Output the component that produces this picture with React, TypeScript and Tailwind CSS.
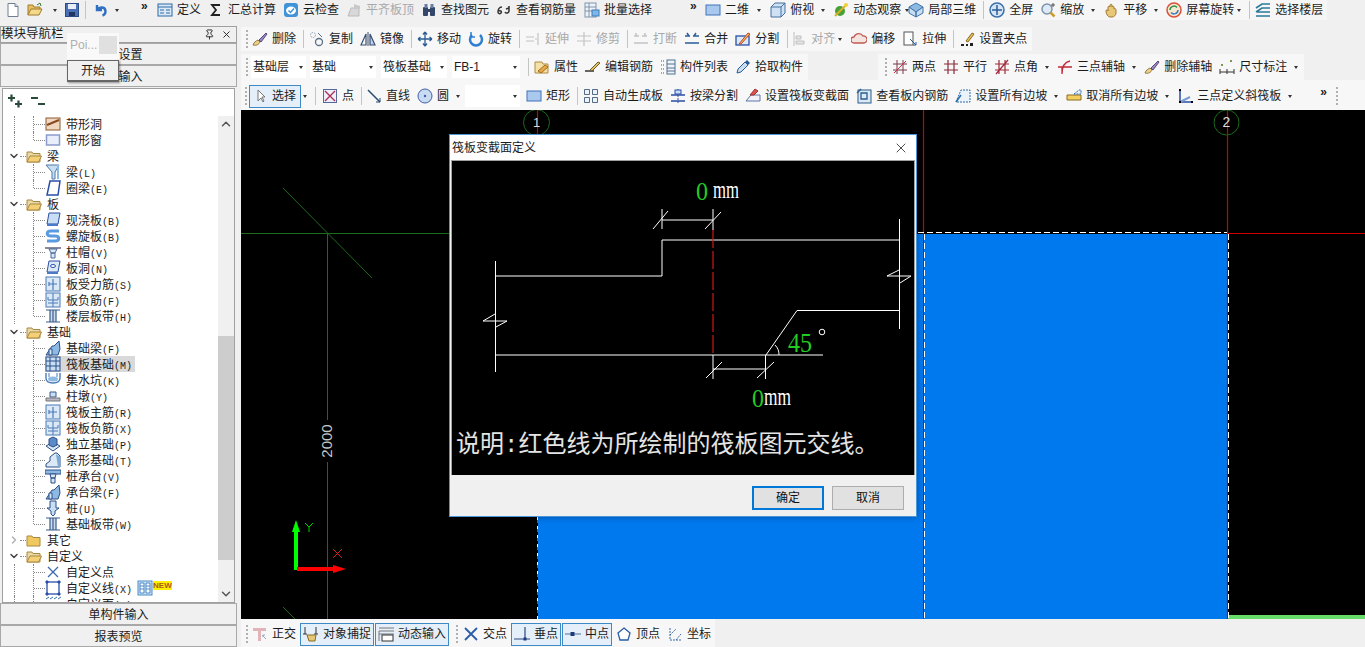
import type { ReactNode } from "react";
import clsx from "clsx";
import { ChevronDown, ChevronRight, ChevronUp, Pin, X } from "lucide-react";

const CJK = "[font-family:'Liberation_Sans','Noto_Sans_CJK_SC',sans-serif]";

const icons: Record<string, ReactNode> = {
	new: <><path d="M3 1.5h7l3 3v10H3z" fill="#fff" stroke="#6f7f94" /><path d="M10 1.5v3h3" fill="#dde3ee" stroke="#6f7f94" /></>,
	open: <><path d="M1 13V3h5l1 2h6v2" fill="#e8c060" stroke="#a07a30" /><path d="M1 13l3-6h11l-3 6z" fill="#f4d98a" stroke="#a07a30" /><path d="M10 3l3-2 1 3" fill="none" stroke="#3a7a3a" /></>,
	save: <><rect x="1.5" y="1.5" width="13" height="13" fill="#4a6fb5" stroke="#2c4a86" /><rect x="4" y="2" width="8" height="5" fill="#e8eef8" /><rect x="5" y="10" width="6" height="4" fill="#22355e" /></>,
	undo: <path d="M4 3v5h5M4.500 7.500c2-3 8-3 8 2 0 2-1.500 3.500-3 4" fill="none" stroke="#2f6fc4" strokeWidth="2.400" />,
	define: <><rect x="1" y="2" width="14" height="12" fill="#dbe8f6" stroke="#2c6aa8" /><path d="M1 5h14M3 8h4M3 11h4M9 8h4M9 11h4" stroke="#2c6aa8" /></>,
	sigma: <path d="M12 3H4l4 5-4 5h8" fill="none" stroke="#222" strokeWidth="1.800" />,
	cloud: <><rect x="1" y="1" width="14" height="14" rx="3" fill="#3f93d6" /><ellipse cx="8" cy="8.500" rx="5" ry="4" fill="#fff" /><path d="M5.500 8.500l2 2 3.500-4" fill="none" stroke="#3f93d6" strokeWidth="1.500" /></>,
	alignTop: <><path d="M2 14l3-8h8v8z" fill="#d8d8d8" stroke="#bbb" /><path d="M8 2l6 2v3H8z" fill="#c8c8c8" /></>,
	binoc: <><rect x="2" y="5" width="5" height="9" rx="1" fill="#34476b" /><rect x="9" y="5" width="5" height="9" rx="1" fill="#34476b" /><rect x="3.500" y="2" width="3" height="4" fill="#6a7da0" /><rect x="9.500" y="2" width="3" height="4" fill="#6a7da0" /><rect x="7" y="7" width="2" height="3" fill="#34476b" /></>,
	rebarQty: <path d="M6 5C3 5 2 8 2 10s2 2 3 1 0-3-2-2M9 10c1 2 4 1 4-1 0-2 0-4 0-5M10 7l3-1" fill="none" stroke="#333" strokeWidth="1.500" />,
	batch: <><rect x="1" y="1" width="11" height="14" fill="#eef3f9" stroke="#7f93ad" /><path d="M1 5h11M1 9h11M5 1v14" stroke="#7f93ad" /><rect x="8" y="8" width="7" height="6" fill="#7db6e8" stroke="#3d79b6" /></>,
	twoD: <rect x="1" y="3" width="14" height="10" fill="#a9c8ee" stroke="#3f73b8" />,
	cube: <><path d="M1 5l4-4h10v10l-4 4H1z" fill="#cfe2f5" stroke="#46709c" /><path d="M1 5h10v10M11 5l4-4" fill="none" stroke="#46709c" /></>,
	orbit: <><circle cx="7" cy="9" r="5" fill="#4aa03a" /><path d="M2 14L14 2" stroke="#d8b020" strokeWidth="2" /><circle cx="13" cy="3" r="2" fill="#f0d040" /></>,
	cube3: <><path d="M8 1l7 4-7 5-7-5z" fill="#8db9e3" stroke="#3f73a8" /><path d="M1 5v6l7 4v-5zM15 5v6l-7 4v-5z" fill="#c9def3" stroke="#3f73a8" /></>,
	full: <><circle cx="8" cy="8" r="7" fill="#d5e5f6" stroke="#3b6fa8" strokeWidth="1.500" /><path d="M8 3v10M3 8h10" stroke="#2c5c96" strokeWidth="1.500" /></>,
	zoom: <><circle cx="7" cy="7" r="5" fill="#dce9f6" stroke="#7f93ad" strokeWidth="1.500" /><path d="M10.500 10.500l4 4" stroke="#c9a030" strokeWidth="2.500" /><path d="M13 1v4M11 3h4" stroke="#555" /></>,
	pan: <><path d="M3 9c0-2 2-1 2 0V5c0-1 2-1 2 0V3c0-1 2-1 2 0v2c0-1 2-1 2 0v2c1-1 2 0 2 1v3c0 2-2 4-4 4H7c-2 0-4-3-4-6z" fill="#e8c878" stroke="#a07a30" /></>,
	spin: <><circle cx="8" cy="8" r="7" fill="#f4ead0" stroke="#d9503a" strokeWidth="1.500" /><path d="M4 8a4 4 0 0 1 7-2.500" fill="none" stroke="#2f8f4a" strokeWidth="1.500" /><path d="M12 8a4 4 0 0 1-7 2.500" fill="none" stroke="#3a7bc8" strokeWidth="1.500" /></>,
	floors: <path d="M1 6l6-4h8M1 10l6-4h8M1 14h14M2 10h13" fill="none" stroke="#2a7a9a" strokeWidth="1.600" />,
	brush: <><path d="M1 14c4 1 6-1 7-3l-2-2c-2 1-4 2-5 5z" fill="#f0d080" stroke="#8a7a50" /><path d="M7 9l7-7 1 1-6 8z" fill="#9a86c0" stroke="#5a4a80" /></>,
	copy: <><circle cx="4" cy="4" r="2.500" fill="none" stroke="#8a99aa" strokeDasharray="1.500 1" /><circle cx="10" cy="11" r="3.500" fill="none" stroke="#5a6f88" strokeWidth="1.300" /><path d="M9 2l4 4" stroke="#5a6f88" /></>,
	mirror: <><path d="M1 14L6 3v11z" fill="none" stroke="#3a4f70" strokeWidth="1.200" /><path d="M15 14L10 3v11z" fill="#bcd2ea" stroke="#3a4f70" strokeWidth="1.200" /><path d="M8 1v14" stroke="#3a4f70" /></>,
	move: <path d="M8 1v14M1 8h14M8 1L6 3.500M8 1l2 2.500M8 15l-2-2.500M8 15l2-2.500M1 8l2.500-2M1 8l2.500 2M15 8l-2.500-2M15 8l-2.500 2" fill="none" stroke="#2a5c96" strokeWidth="1.300" />,
	rotate: <><path d="M4 4a6 6 0 1 0 8 0" fill="none" stroke="#2f7fd0" strokeWidth="2.500" /><path d="M3 1v5h4" fill="none" stroke="#2f7fd0" strokeWidth="1.500" /></>,
	extend: <path d="M13 2v12M1 6h8M1 10h8M10 8h2" stroke="#c4c4c4" strokeWidth="1.200" />,
	trim: <path d="M8 1v14M1 5h14M1 10h14" stroke="#c4c4c4" strokeWidth="1.200" />,
	breakLine: <path d="M1 5h5M9 5h5M1 12h14M3 2v3M12 2v3" stroke="#c4c4c4" strokeWidth="1.500" />,
	merge: <path d="M1 5h5M9 5h6M1 12h14M3 2l2 3M12 2l-2 3" stroke="#2a5c96" strokeWidth="1.500" fill="none" />,
	split: <><rect x="1" y="5" width="13" height="9" fill="#dbe8f6" stroke="#2a4fa8" strokeWidth="1.300" /><path d="M4 13l9-11 2 1-9 10z" fill="#f0c040" stroke="#c04040" /></>,
	align: <path d="M3 1v14M5 5h5v3H5zM5 10h8v3H5z" fill="#e4e4e4" stroke="#c0c0c0" />,
	offset: <path d="M3 12a3 3 0 0 1 0-6 5 5 0 0 1 9-1 3.500 3.500 0 0 1 1 7z" fill="#f3e4e0" stroke="#c05a50" strokeWidth="1.300" />,
	stretch: <><rect x="2" y="1" width="9" height="13" fill="#fff" stroke="#555" /><path d="M8 8l6 6M11 14h3v-3" fill="none" stroke="#2a5c96" /></>,
	grip: <><path d="M2 14h3M7 14h2" stroke="#222" strokeWidth="2" /><rect x="11" y="12" width="3" height="3" fill="#222" /><path d="M7 10l6-8 2 1-6 8z" fill="#e8c060" stroke="#8a6a20" /></>,
	prop: <><path d="M1 14V3h7l1 2h5v9z" fill="#f4e0a8" stroke="#b08a40" /><path d="M4 12l7-6 3 2-7 6z" fill="#e8a848" stroke="#a07020" /></>,
	editBar: <><path d="M0 12h9" stroke="#333" strokeWidth="1.500" /><path d="M5 11L13 3l2 1-8 8z" fill="#e8c060" stroke="#6a5a30" /></>,
	list: <><path d="M1 2h3M1 6h3M1 10h3M1 14h3" stroke="#7a8ca6" strokeWidth="1.500" strokeDasharray="1 1" /><rect x="7" y="1" width="8" height="14" fill="#eef3f9" stroke="#52708f" /><path d="M7 5h8M7 9h8M7 12h8" stroke="#52708f" /></>,
	pick: <><path d="M2 14l1-4 7-7 3 3-7 7z" fill="#c9def3" stroke="#2a5c96" /><path d="M10 3l2-2 3 3-2 2z" fill="#2a5c96" /></>,
	twoPoint: <><path d="M1 5h14M1 11h14M5 1v14M11 1v14" stroke="#7a3a4a" /><path d="M2 14L14 2" stroke="#d02a40" /></>,
	parallel: <path d="M1 5h14M1 11h14M5 1v14M11 1v14" stroke="#8a2a3a" strokeWidth="1.200" />,
	pointAngle: <path d="M1 5h14M1 11h14M5 1v14M11 1v14M2 15L14 1" stroke="#a02a3a" strokeWidth="1.200" />,
	threeAxis: <path d="M1 8h14M5 15c0-8 3-12 8-13M5 8v7" fill="none" stroke="#c02a3a" strokeWidth="1.300" />,
	dim: <><path d="M1 13h14M1 10v5M8 10v5M15 10v5" stroke="#333" /><rect x="2" y="5" width="2" height="2" fill="#7a9a4a" /><rect x="11" y="1" width="2" height="2" fill="#7a9a4a" /></>,
	cursor: <path d="M6 2v11l3-3 2 4 1-1-2-4h3z" fill="#fff" stroke="#777" />,
	point: <><rect x="1.500" y="1.500" width="13" height="13" fill="#eef" stroke="#556a9a" /><path d="M3 3l10 10M13 3L3 13" stroke="#b03050" strokeWidth="1.400" /></>,
	line: <><path d="M2 2l12 12" stroke="#2a4a70" strokeWidth="1.500" /><path d="M14 14v-4M14 14h-4" stroke="#2a4a70" /></>,
	circle: <><circle cx="8" cy="8" r="7" fill="#c9daf3" stroke="#3f5fa8" /><circle cx="8" cy="8" r="1.200" fill="#3f5fa8" /></>,
	rect: <rect x="1" y="3" width="14" height="10" fill="#a9c8ee" stroke="#3f73b8" />,
	autoGen: <path d="M1.500 1.500h5v5h-5zM9.500 1.500h5v5h-5zM1.500 9.500h5v5h-5zM9.500 9.500h5v5h-5z" fill="#eef3f9" stroke="#506a86" />,
	beamSplit: <><path d="M1 7h14M1 13h14" stroke="#2a4fa8" strokeWidth="1.300" /><path d="M8 1v14" stroke="#2a4fa8" strokeDasharray="2 1" /><rect x="5" y="2" width="6" height="4" fill="#c9def3" stroke="#2a4fa8" /></>,
	varSection: <><path d="M1 13l5-6h9v6z" fill="#f3f0f8" stroke="#5a78a8" /><path d="M5 7l5-6 3 2-4 4z" fill="#e05050" stroke="#a03030" /></>,
	viewRebar: <><rect x="2" y="2" width="13" height="13" fill="#dbe8f6" stroke="#2a5c8a" /><path d="M1 5l4-4M5 5h6v6H5z" fill="none" stroke="#2a5c8a" strokeWidth="1.300" /></>,
	slopeAll: <><path d="M1 14L6 2h9v12z" fill="#eaf2fa" stroke="#2a6ca8" strokeDasharray="2 1" /><path d="M1 14L6 7" stroke="#2a6ca8" strokeWidth="1.500" /></>,
	slopeNone: <><path d="M1 12V7h14v5z" fill="#f4d060" stroke="#8a6a20" /><path d="M8 6l5-4h2v4z" fill="#eaf2fa" stroke="#2a6ca8" strokeDasharray="2 1" /></>,
	threeSlope: <><path d="M3 2v12h12" fill="none" stroke="#2a4fa8" strokeWidth="1.500" /><path d="M3 14l10-5" stroke="#7a9ad0" strokeWidth="2" /><rect x="2" y="1" width="2" height="2" /><rect x="14" y="13" width="2" height="2" /><rect x="2" y="13" width="2" height="2" /></>,
	ortho: <><path d="M1 2h13v3H9v10H6V5H1z" fill="#e0b4b8" /><path d="M10 9l4 4M12 8v2h-2" stroke="#9ab" fill="none" /></>,
	snap: <><path d="M2 1v7M13 1v7M0 8h4M11 8h4" stroke="#333" /><path d="M4 9h9l-1 6H6z" fill="#e4c878" stroke="#8a6a20" /></>,
	dynInput: <><path d="M1 2h15M1 5h15M1 5v10M1 8h15" stroke="#777" /><rect x="4" y="9" width="11" height="6" fill="#fff" stroke="#333" /></>,
	cross: <path d="M2 2l12 12M14 2L2 14" stroke="#2a5ca8" strokeWidth="1.800" />,
	perp: <><path d="M0 13h16M11 1v12" stroke="#2a4a80" strokeWidth="1.200" /><rect x="9.500" y="11.500" width="3" height="3" fill="#1a3a7a" /></>,
	mid: <><path d="M0 8h16" stroke="#7a90b0" strokeWidth="1.400" /><rect x="5.500" y="6" width="4" height="4" fill="#1a3a7a" /></>,
	vertex: <path d="M8 2l6 5-2 7H4L2 7z" fill="#fff" stroke="#2a5ca8" strokeWidth="1.300" />,
	coord: <path d="M3 2v12M3 14h11M3 9l6-6M9 14l5-6" stroke="#3a6aa8" strokeDasharray="2 1" fill="none" />,

	band: <><rect x="1" y="2" width="14" height="12" fill="#f0d8c0" stroke="#8a5a30" /><path d="M2 9l12-5" stroke="#8a4a20" strokeWidth="2" /></>,
	bandWin: <rect x="1.500" y="3" width="13" height="10" fill="#e8eefa" stroke="#8a9acb" strokeWidth="1.500" />,
	beam: <><path d="M1 1h13l-4 7v7H7V8z" fill="#c9def3" stroke="#4a7aa8" /><path d="M12 1l2 0v14h-2z" fill="#8db9e3" /></>,
	ring: <path d="M5 1h10l-2 14H2z" fill="#fff" stroke="#2a4fa8" strokeWidth="1.500" />,
	slab: <><path d="M4 1h11l-2 11H2z" fill="#c9def3" stroke="#2a4fa8" /><path d="M2 12h11v2H2z" fill="#4a7ac8" /></>,
	spiral: <path d="M14 3H6C1 3 1 8 6 8h4c5 0 5 5 0 5H2" fill="none" stroke="#5a9ae0" strokeWidth="3" />,
	cap: <><path d="M0 3h16v2H0z" fill="#8a8a9a" /><path d="M4 5h8l-2 4H6zM6 9h4v5H6z" fill="#dbe8f6" stroke="#4a6a98" /></>,
	hole: <><path d="M4 1h11l-2 11H2z" fill="#dbe8f6" stroke="#2a4fa8" /><ellipse cx="8" cy="6" rx="2.500" ry="1.500" fill="#fff" stroke="#2a4fa8" /><path d="M2 12h11v2H2z" fill="#4a7ac8" /></>,
	rebarSlab: <><rect x="1" y="1" width="14" height="14" fill="#dbe8f6" stroke="#4a7ab8" /><path d="M8 3v11M4 8h8M4 6v4" stroke="#4a7ab8" strokeWidth="1.200" fill="none" /></>,
	rebarNeg: <><rect x="1" y="1" width="14" height="14" fill="#dbe8f6" stroke="#4a7ab8" /><path d="M8 1v14M3 5v3h10V5M3 11h10" stroke="#4a7ab8" fill="none" /></>,
	strip: <><rect x="5" y="2" width="6" height="12" fill="#c9def3" /><path d="M1 2h14M1 14h14M5 2v12M11 2v12M8 2v12" stroke="#3a5a88" strokeWidth="1.200" /></>,
	footBeam: <><path d="M1 15l6-9h2l5-5 1 8-2 6z" fill="#8db9e3" stroke="#2a4f88" /><path d="M4 15V9h3v6z" fill="#dbe8f6" stroke="#2a4f88" /></>,
	raft: <><rect x="1" y="1" width="14" height="14" fill="#c9def3" stroke="#2a4f88" /><path d="M1 5h14M1 10h14M5 1v14M11 1v14" stroke="#2a4f88" /></>,
	pit: <><path d="M1 1v5c0 3 2 5 7 5s7-2 7-5V1" fill="none" stroke="#4a7ab8" strokeWidth="1.400" /><ellipse cx="8" cy="7" rx="5" ry="2.500" fill="#8db9e3" /><path d="M4 1v4M12 1v4" stroke="#4a7ab8" /></>,
	pier: <><path d="M5 9V4h6v5z" fill="#c9def3" stroke="#3a5a88" /><path d="M1 10h14v3H1z" fill="#b8b8c8" stroke="#777" /></>,
	isoFoot: <><path d="M1 10l7-4 7 4-7 5z" fill="#dbe8f6" stroke="#2a4f88" /><path d="M4 9V3l4-2 4 2v6l-4 2z" fill="#5a8ac8" stroke="#2a4f88" /></>,
	stripFoot: <><path d="M1 15v-3l4-3V5l5-4h2l3 3v11z" fill="#dbe8f6" stroke="#2a4f88" /><path d="M11 2l4 3v10h-2z" fill="#7aaad8" /></>,
	pileCap: <><path d="M0 2h16v4H0z" fill="#8db9e3" stroke="#2a4f88" /><path d="M5 6h6l-1 4H6zM6 10h4v5H6z" fill="#dbe8f6" stroke="#2a4f88" /></>,
	pile: <><path d="M5 1h6v7h3l-4 3v3l-2 2-2-2v-3L2 8h3z" fill="#c9def3" stroke="#2a4f88" /></>,
	customPt: <path d="M3 3l10 10M13 3L3 13" stroke="#3a6aa8" strokeWidth="1.300" />,
	customLine: <><rect x="2" y="2" width="12" height="12" fill="#fff" stroke="#2a4fa8" strokeWidth="1.300" /><path d="M1 1h2v2H1zM13 1h2v2h-2zM1 13h2v2H1zM13 13h2v2h-2z" fill="#2a4fa8" stroke="#2a4fa8" /></>,
	customFace: <path d="M1 3l3-2M5 3l3-2M9 3l3-2M13 3l3-2" stroke="#3a6aa8" />,
	cols: <><rect x="1" y="1" width="14" height="14" fill="#cfe2f5" stroke="#4a8ac8" /><path d="M3 3h4v10H3zM9 3h4v10H9zM3 6h4M3 9h4M9 6h4M9 9h4" fill="#fff" stroke="#4a8ac8" /></>,
};

function Ic({ name }: { name: string }) {
	return (
		<svg width="16" height="16" viewBox="0 0 16 16" className="shrink-0">
			{icons[name]}
		</svg>
	);
}

function Caret({ m = "ml-[7px]" }: { m?: string }) {
	return <span className={clsx("mr-px h-0 w-0 shrink-0 border-x-[2.5px] border-t-[3px] border-x-transparent border-t-[#333]", m)} />;
}

function Sep({ m = "ml-[7px]" }: { m?: string }) {
	return <span className={clsx("h-[18px] w-px shrink-0 bg-[#c4c4c4]", m)} />;
}

function Gripper({ m }: { m: string }) {
	return <span className={clsx("h-[18px] w-[2px] shrink-0 border-l-2 border-dotted border-[#b0b0b0]", m)} />;
}

function Tool({ icon, label, m = "ml-[7px]", off }: { icon: string; label: string; m?: string; off?: boolean }) {
	return (
		<div className={clsx("flex shrink-0 items-center", m)}>
			<Ic name={icon} />
			<span className={clsx("ml-1 whitespace-nowrap text-[12px] leading-4", off ? "text-[#a8a8a8]" : "text-[#1c1c1c]")}>{label}</span>
		</div>
	);
}

function Combo({ text, w, m }: { text: string; w: string; m: string }) {
	return (
		<div className={clsx("flex h-[22px] shrink-0 items-center justify-between bg-white pl-[2px] pr-[2px] text-[12px] text-[#1c1c1c]", w, m)}>
			<span>{text}</span>
			<Caret m="ml-0" />
		</div>
	);
}

function More({ m }: { m: string }) {
	return <span className={clsx("w-2 shrink-0 self-start text-[12px] font-bold leading-[12px] text-[#222]", m)}>»</span>;
}

function OnTool({ icon, label, m }: { icon: string; label: string; m: string }) {
	return (
		<div className={clsx("flex h-[23px] shrink-0 items-center border border-[#3d8ac7] bg-[#e4eff9] pl-[2px]", m)}>
			<Ic name={icon} />
			<span className="ml-1 whitespace-nowrap text-[12px] text-[#1c1c1c]">{label}</span>
		</div>
	);
}

function TopBar() {
	return (
		<div className="flex h-[26px] items-center pb-[6px] pl-[5px]">
			<Ic name="new" />
			<div className="ml-[6px]"><Ic name="open" /></div>
			<Caret m="ml-[10px]" />
			<div className="ml-[6px]"><Ic name="save" /></div>
			<Sep m="ml-[5px]" />
			<div className="ml-[7px]"><Ic name="undo" /></div>
			<Caret m="ml-[6px]" />
			<More m="ml-[21px]" />
			<Tool icon="define" label="定义" m="ml-[8px]" />
			<Tool icon="sigma" label="汇总计算" />
			<Tool icon="cloud" label="云检查" />
			<Tool icon="alignTop" label="平齐板顶" off />
			<Tool icon="binoc" label="查找图元" />
			<Tool icon="rebarQty" label="查看钢筋量" />
			<Tool icon="batch" label="批量选择" m="ml-[8px]" />
			<More m="ml-[38px]" />
			<div className="ml-[7px] flex h-full items-center bg-[#f6f6f6]">
				<Tool icon="twoD" label="二维" m="ml-0" />
				<Caret m="ml-2" />
				<Tool icon="cube" label="俯视" m="ml-2" />
				<Caret />
				<Tool icon="orbit" label="动态观察" />
				<Caret m="ml-1" />
				<Tool icon="cube3" label="局部三维" m="-ml-[2px]" />
				<Sep />
				<Tool icon="full" label="全屏" m="ml-[5px]" />
				<Tool icon="zoom" label="缩放" />
				<Caret />
				<Tool icon="pan" label="平移" />
				<Caret />
				<Tool icon="spin" label="屏幕旋转" />
				<Caret m="ml-[3px]" />
				<Sep />
				<Tool icon="floors" label="选择楼层" m="ml-[5px]" />
				<span className="w-1" />
			</div>
		</div>
	);
}

function EditBar() {
	return (
		<div className="flex h-[26px] items-center">
			<div className="flex h-[24px] items-center bg-[#f7f7f7] pr-[5px]">
				<Gripper m="ml-[5px]" />
				<Tool icon="brush" label="删除" m="ml-1" />
				<Sep />
				<Tool icon="copy" label="复制" m="ml-[5px]" />
				<Tool icon="mirror" label="镜像" />
				<Sep />
				<Tool icon="move" label="移动" m="ml-[5px]" />
				<Tool icon="rotate" label="旋转" />
				<Sep />
				<Tool icon="extend" label="延伸" m="ml-[5px]" off />
				<Tool icon="trim" label="修剪" off />
				<Sep />
				<Tool icon="breakLine" label="打断" m="ml-[5px]" off />
				<Tool icon="merge" label="合并" />
				<Tool icon="split" label="分割" />
				<Sep m="ml-2" />
				<Tool icon="align" label="对齐" m="ml-[3px]" off />
				<Caret m="ml-[3px]" />
				<Tool icon="offset" label="偏移" m="ml-2" />
				<Tool icon="stretch" label="拉伸" />
				<Sep />
				<Tool icon="grip" label="设置夹点" m="ml-[5px]" />
			</div>
		</div>
	);
}

function PropBar() {
	return (
		<div className="flex h-7 items-center pt-[2px]">
			<div className="flex h-[26px] items-center bg-[#f7f7f7] pr-[5px]">
				<Gripper m="ml-[5px]" />
				<Combo text="基础层" w="w-[55px]" m="ml-[3px]" />
				<Combo text="基础" w="w-[66px]" m="ml-1" />
				<Combo text="筏板基础" w="w-[66px]" m="ml-[5px]" />
				<Combo text="FB-1" w="w-[68px]" m="ml-[5px]" />
				<Sep m="ml-2" />
				<Tool icon="prop" label="属性" m="ml-[5px]" />
				<Tool icon="editBar" label="编辑钢筋" />
				<Tool icon="list" label="构件列表" />
				<Tool icon="pick" label="拾取构件" />
			</div>
			<div className="ml-[70px] flex h-[26px] items-center bg-[#f7f7f7] pr-[5px]">
				<Gripper m="ml-[7px]" />
				<Tool icon="twoPoint" label="两点" m="ml-[5px]" />
				<Tool icon="parallel" label="平行" />
				<Tool icon="pointAngle" label="点角" />
				<Caret />
				<Tool icon="threeAxis" label="三点辅轴" />
				<Caret />
				<Tool icon="brush" label="删除辅轴" />
				<Tool icon="dim" label="尺寸标注" />
				<Caret />
			</div>
		</div>
	);
}

function DrawBar() {
	return (
		<div className="flex h-[30px] items-center bg-[#f7f7f7] pt-[2px]">
			<Gripper m="ml-1" />
			<OnTool icon="cursor" label="选择" m="ml-[2px] pr-[4px]" />
			<Caret m="ml-[2px]" />
			<Sep />
			<Tool icon="point" label="点" m="ml-[6px]" />
			<Sep />
			<Tool icon="line" label="直线" m="ml-1" />
			<Tool icon="circle" label="圆" />
			<Caret />
			<Combo text="" w="w-[55px]" m="ml-1" />
			<Tool icon="rect" label="矩形" m="ml-[6px]" />
			<Sep />
			<Tool icon="autoGen" label="自动生成板" m="ml-[5px]" />
			<Tool icon="beamSplit" label="按梁分割" />
			<Tool icon="varSection" label="设置筏板变截面" />
			<Tool icon="viewRebar" label="查看板内钢筋" />
			<Tool icon="slopeAll" label="设置所有边坡" />
			<Caret />
			<Tool icon="slopeNone" label="取消所有边坡" />
			<Caret />
			<Tool icon="threeSlope" label="三点定义斜筏板" />
			<Caret />
			<More m="ml-[27px] mt-1" />
			<Gripper m="ml-2" />
		</div>
	);
}

function SnapBar() {
	return (
		<div className="flex h-7 items-center">
			<div className="flex h-full w-[474px] items-center bg-[#f7f7f7] pt-[2px]">
				<Gripper m="ml-[5px]" />
				<Tool icon="ortho" label="正交" m="ml-1" />
				<OnTool icon="snap" label="对象捕捉" m="ml-1 pr-[2px]" />
				<OnTool icon="dynInput" label="动态输入" m="ml-px pr-[2px]" />
				<Gripper m="ml-[7px]" />
				<Tool icon="cross" label="交点" m="ml-[5px]" />
				<OnTool icon="perp" label="垂点" m="ml-1 pr-[2px]" />
				<OnTool icon="mid" label="中点" m="ml-px pr-[2px]" />
				<Tool icon="vertex" label="顶点" m="ml-1" />
				<Tool icon="coord" label="坐标" />
			</div>
		</div>
	);
}

function CanvasArt() {
	return (
		<svg width="1124" height="509" viewBox="241 110 1124 509" className="block">
			<rect x="538" y="234" width="689" height="385" fill="#0078ee" />
			<rect x="1228" y="615" width="137" height="4" fill="#66dd66" />

			<g stroke="#1c6b1c" fill="none">
				<path d="M241 233.500H449M327.500 233.500V420M327.500 462V619M283 188L372 278M283 607L295 619" />
				<circle cx="536.500" cy="122.500" r="13" />
				<circle cx="1226.500" cy="122.500" r="12.500" />
			</g>
			<g stroke="#d00000" fill="none" strokeWidth="1.200">
				<path d="M537.500 110V134" />
				<path d="M923.500 110V234" />
				<path d="M1227.500 110V619" />
				<path d="M1227 233.500H1365" />
			</g>
			<path d="M923.500 234V619" stroke="#1a3a70" />
			<path d="M918 232.500H1227M924.500 234V619M1228.500 234V619M537.500 517V619" stroke="#fff" strokeDasharray="6 3" fill="none" />
			<path d="M537.500 520V619" stroke="#c03050" strokeDasharray="3 6" />
			<text x="536.500" y="127" fontSize="13" fill="#ddd" textAnchor="middle" fontFamily="Liberation Sans">1</text>
			<text x="1226.500" y="127" fontSize="14" fill="#ddd" textAnchor="middle" fontFamily="Liberation Sans">2</text>
			<text x="0" y="0" fontSize="15" fill="#c8c8c8" textAnchor="middle" fontFamily="Liberation Sans" transform="translate(332 441) rotate(-90)">2000</text>

			<path d="M296 570V530" stroke="#00ff00" strokeWidth="4" />
			<path d="M296 520l-4 12h8z" fill="#00ff00" />
			<path d="M297 569H334" stroke="#ff0000" strokeWidth="4" />
			<path d="M346 569l-13-4v8z" fill="#ff0000" />
			<path d="M305 523l4 4 4-4M309 527v5" stroke="#00cc00" fill="none" />
			<path d="M333 549l9 9M342 549l-9 9" stroke="#cc2020" fill="none" />
		</svg>
	);
}

function SectionArt() {
	const serif = "Liberation Serif";
	return (
		<svg width="462" height="269" viewBox="452 161 462 269" className="block">
			<g stroke="#fff" fill="none">
				<path d="M495.500 261V372M495.500 276H662V240H899.500M899.500 219V329M899.500 310.500H797L766 355M495.500 355H823" />
				<path d="M662 209V229M662 220H713M713 209V230M653 229L668 211M705 229L721 212" />
				<path d="M713 355V379M765.500 355V379M713 369H765.500M706 378L722 362M757 378L774 362" />
				<path d="M483 321L495 314M483 321H507L496 327M887 276L899 270M887 276H911L900 283" />
				<path d="M775 345C778 348 779 351 779 355" />
				<circle cx="822" cy="332" r="2.800" />
			</g>
			<path d="M713 230V355" stroke="#d01818" strokeDasharray="18 3" strokeWidth="1.200" />
			<text x="696" y="200" fontSize="25" fill="#22cc22" fontFamily={serif} textLength="12" lengthAdjust="spacingAndGlyphs">0</text>
			<text x="713" y="198" fontSize="25" fill="#fff" fontFamily={serif} textLength="26" lengthAdjust="spacingAndGlyphs">mm</text>
			<text x="788" y="352" fontSize="27" fill="#22cc22" fontFamily={serif} textLength="24" lengthAdjust="spacingAndGlyphs">45</text>
			<text x="752" y="407" fontSize="25" fill="#22cc22" fontFamily={serif} textLength="12" lengthAdjust="spacingAndGlyphs">0</text>
			<text x="764" y="405" fontSize="25" fill="#fff" fontFamily={serif} textLength="27" lengthAdjust="spacingAndGlyphs">mm</text>
		</svg>
	);
}

function SectionDialog() {
	return (
		<div className="absolute left-[449px] top-[134px] flex h-[383px] w-[468px] flex-col border border-[#4a96d8] bg-[#f0f0f0] shadow-[0_0_6px_rgba(0,0,0,0.35)]">
			<div className="flex h-[25px] items-center justify-between bg-white pl-[2px] pr-[7px]">
				<span className="text-[12px] text-[#1c1c1c]">筏板变截面定义</span>
				<X size={16} strokeWidth={1.2} className="text-[#222]" />
			</div>
			<div className="mx-px h-[315px] border-x border-t border-[#a0a0a0] bg-black">
				<SectionArt />
				<div className="-mt-px whitespace-nowrap pl-1 text-[24px] leading-[30px] text-[#e4e4e4]">
					说明<span className="[font-family:'Liberation_Mono',monospace]">:</span>红色线为所绘制的筏板图元交线。
				</div>
			</div>
			<div className="flex flex-1 items-start justify-end gap-2 pr-3 pt-[11px]">
				<button className="h-[24px] w-[72px] border-2 border-[#0078d7] bg-[#e1e1e1] text-[12px] text-[#111]">确定</button>
				<button className="h-[24px] w-[72px] border border-[#adadad] bg-[#e1e1e1] text-[12px] text-[#111]">取消</button>
			</div>
		</div>
	);
}

type Node = { g?: boolean; shut?: boolean; name: string; key?: string; icon?: string; last?: boolean; hit?: boolean; extra?: boolean };

const tree: Node[] = [
	{ name: "带形洞", icon: "band" },
	{ name: "带形窗", icon: "bandWin", last: true },
	{ g: true, name: "梁" },
	{ name: "梁", key: "L", icon: "beam" },
	{ name: "圈梁", key: "E", icon: "ring", last: true },
	{ g: true, name: "板" },
	{ name: "现浇板", key: "B", icon: "slab" },
	{ name: "螺旋板", key: "B", icon: "spiral" },
	{ name: "柱帽", key: "V", icon: "cap" },
	{ name: "板洞", key: "N", icon: "hole" },
	{ name: "板受力筋", key: "S", icon: "rebarSlab" },
	{ name: "板负筋", key: "F", icon: "rebarNeg" },
	{ name: "楼层板带", key: "H", icon: "strip", last: true },
	{ g: true, name: "基础" },
	{ name: "基础梁", key: "F", icon: "footBeam" },
	{ name: "筏板基础", key: "M", icon: "raft", hit: true },
	{ name: "集水坑", key: "K", icon: "pit" },
	{ name: "柱墩", key: "Y", icon: "pier" },
	{ name: "筏板主筋", key: "R", icon: "rebarSlab" },
	{ name: "筏板负筋", key: "X", icon: "rebarNeg" },
	{ name: "独立基础", key: "P", icon: "isoFoot" },
	{ name: "条形基础", key: "T", icon: "stripFoot" },
	{ name: "桩承台", key: "V", icon: "pileCap" },
	{ name: "承台梁", key: "F", icon: "footBeam" },
	{ name: "桩", key: "U", icon: "pile" },
	{ name: "基础板带", key: "W", icon: "strip", last: true },
	{ g: true, shut: true, name: "其它" },
	{ g: true, name: "自定义" },
	{ name: "自定义点", icon: "customPt" },
	{ name: "自定义线", key: "X", icon: "customLine", extra: true },
	{ name: "自定义面", key: "A", icon: "customFace" },
];

function Folder({ shut }: { shut?: boolean }) {
	return (
		<svg width="16" height="16" viewBox="0 0 16 16" className="shrink-0">
			<path d="M1 14V4h5l1 1.500h7V14z" fill={shut ? "#f0c860" : "#e9d9a8"} stroke="#a8893f" />
			{!shut && <path d="M1 14l3-6h11.500L12.500 14z" fill="#f3cf78" stroke="#a8893f" />}
		</svg>
	);
}

function TreeRow({ n }: { n: Node }) {
	if (n.g) {
		return (
			<div className="flex h-4 items-center text-[12px] text-[#1c1c1c]">
				<span className="flex w-[17px] justify-end">
					{n.shut
						? <ChevronRight size={12} strokeWidth={2.5} className="text-[#aaa]" />
						: <ChevronDown size={12} strokeWidth={3} className="text-[#444]" />}
				</span>
				<span className="w-[6px] border-b border-dotted border-[#888]" />
				<Folder shut={n.shut} />
				<span className="ml-[5px] pt-[2px]">{n.name}</span>
			</div>
		);
	}
	return (
		<div className="flex h-4 items-center text-[12px] text-[#1c1c1c]">
			<span className="h-full w-[12px] border-r border-dotted border-[#888]" />
			<span className={clsx("w-[19px] self-start border-r border-dotted border-[#888]", n.last ? "h-2" : "h-full")} />
			<span className="w-[11px] border-b border-dotted border-[#888]" />
			<div className={clsx("flex h-full items-center pr-[3px]", n.hit && "bg-[#d9d9d9]")}>
				<Ic name={n.icon!} />
				<span className="ml-[5px] whitespace-nowrap pt-[2px]">
					{n.name}
					{n.key && <span className="[font-family:'Liberation_Mono',monospace] text-[10px]">({n.key})</span>}
				</span>
			</div>
			{n.extra && (
				<>
					<span className="ml-[2px]"><Ic name="cols" /></span>
					<span className="mb-[5px] bg-[#fff000] text-[8px] font-bold leading-[9px] text-[#b0561a]">NEW</span>
				</>
			)}
		</div>
	);
}

function NavTab({ text }: { text: string }) {
	return <div className="flex h-[22px] shrink-0 items-center justify-center border border-[#a8a8a8] bg-[#f0f0f0] pt-[2px] text-[12px] text-[#1c1c1c]">{text}</div>;
}

function NavPanel() {
	return (
		<div className="flex w-[237px] shrink-0 flex-col">
			<div className="flex h-[17px] shrink-0 items-center justify-between border border-[#a0a0a0] bg-[#f0f0f0] pr-1 text-[12.500px] leading-none text-[#1c1c1c]">
				<span>模块导航栏</span>
				<span className="flex items-center gap-[6px]">
					<Pin size={11} className="text-[#222]" />
					<X size={11} className="text-[#222]" />
				</span>
			</div>
			<NavTab text="工程设置" />
			<NavTab text="绘图输入" />
			<div className="mx-[2px] mt-px flex min-h-0 flex-1 flex-col border border-[#a0a0a0] bg-white">
				<div className="flex h-[27px] shrink-0 items-center gap-[7px] pb-1 pl-1">
					<svg width="16" height="16" viewBox="0 0 16 16"><path d="M1 5h7M4.500 1.500v7M8 11h7M11.500 7.500v7" stroke="#2a4a3a" strokeWidth="2.200" /></svg>
					<svg width="16" height="16" viewBox="0 0 16 16"><path d="M1 5h7M8 11h7" stroke="#2a4a3a" strokeWidth="2.200" /></svg>
				</div>
				<div className="flex min-h-0 flex-1">
					<div className="min-w-0 flex-1 overflow-hidden">
						{tree.map((n, i) => <TreeRow key={i} n={n} />)}
					</div>
					<div className="flex w-4 shrink-0 flex-col bg-[#f0f0f0]">
						<ChevronUp size={14} strokeWidth={2.5} className="mx-auto my-px shrink-0 text-[#555]" />
						<div className="h-[204px] shrink-0" />
						<div className="h-[224px] shrink-0 bg-[#cdcdcd]" />
						<div className="flex-1" />
						<ChevronDown size={14} strokeWidth={2.5} className="mx-auto my-px shrink-0 text-[#555]" />
					</div>
				</div>
			</div>
			<NavTab text="单构件输入" />
			<NavTab text="报表预览" />
		</div>
	);
}

function TaskPopup() {
	return (
		<div className="absolute left-[67px] top-[33px] w-[52px] bg-[#f9f9f9]">
			<div className="flex h-[27px] items-start pl-[3px] pt-[3px]">
				<span className="text-[12px] leading-[18px] text-[#b0b0b0]">Poi...</span>
				<span className="ml-[2px] h-[18px] w-[18px] bg-[#e0e0e0]" />
			</div>
			<div className="flex h-[22px] items-center justify-center border border-[#666] border-b-2 bg-[#f0f0f0] text-[12px] text-[#1c1c1c] shadow-[1px_1px_2px_rgba(0,0,0,0.4)]">开始</div>
		</div>
	);
}

export default function App() {
	return (
		<div className={clsx("relative flex h-[647px] w-[1365px] flex-col overflow-hidden bg-[#f0f0f0]", CJK)}>
			<TopBar />
			<div className="flex min-h-0 flex-1">
				<NavPanel />
				<div className="ml-1 flex min-w-0 flex-1 flex-col">
					<EditBar />
					<PropBar />
					<DrawBar />
					<div className="h-[509px] bg-black">
						<CanvasArt />
					</div>
					<SnapBar />
				</div>
			</div>
			<SectionDialog />
			<TaskPopup />
		</div>
	);
}
